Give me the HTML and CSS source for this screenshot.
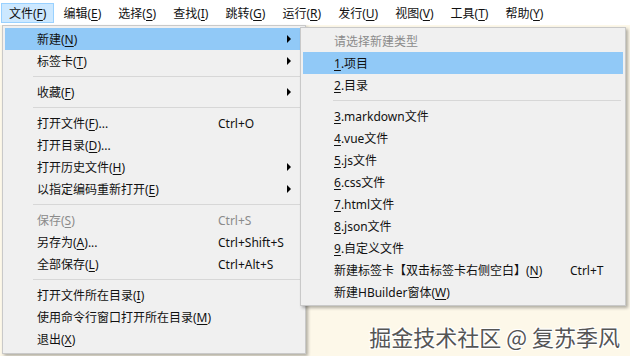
FILE: index.html
```html
<!DOCTYPE html>
<html lang="zh-CN">
<head>
    <meta charset="UTF-8">
    <title>HBuilderX 文件菜单</title>
    <meta name="viewport" content="width=device-width, initial-scale=1.0">
    <link rel="stylesheet" href="styles.css">
</head>
<body>
    <div class="menu-bar">
        <span class="bar-item active">文件(<u>F</u>)</span>
        <span class="bar-item">编辑(<u>E</u>)</span>
        <span class="bar-item">选择(<u>S</u>)</span>
        <span class="bar-item">查找(<u>I</u>)</span>
        <span class="bar-item">跳转(<u>G</u>)</span>
        <span class="bar-item">运行(<u>R</u>)</span>
        <span class="bar-item">发行(<u>U</u>)</span>
        <span class="bar-item">视图(<u>V</u>)</span>
        <span class="bar-item">工具(<u>T</u>)</span>
        <span class="bar-item">帮助(<u>Y</u>)</span>
    </div>

    <div class="workspace">
        <!-- menu principal -->
        <div class="dropdown main-menu">
            <div class="item hover"><span>新建(<u>N</u>)</span><span></span><i class="arrow"></i></div>
            <div class="item"><span>标签卡(<u>T</u>)</span><span></span><i class="arrow"></i></div>
            <div class="sep"></div>
            <div class="item"><span>收藏(<u>F</u>)</span><span></span><i class="arrow"></i></div>
            <div class="sep"></div>
            <div class="item"><span>打开文件(<u>F</u>)...</span><span>Ctrl+O</span><i></i></div>
            <div class="item"><span>打开目录(<u>D</u>)...</span><span></span><i></i></div>
            <div class="item"><span>打开历史文件(<u>H</u>)</span><span></span><i class="arrow"></i></div>
            <div class="item"><span>以指定编码重新打开(<u>E</u>)</span><span></span><i class="arrow"></i></div>
            <div class="sep"></div>
            <div class="item disabled"><span>保存(<u>S</u>)</span><span>Ctrl+S</span><i></i></div>
            <div class="item"><span>另存为(<u>A</u>)...</span><span>Ctrl+Shift+S</span><i></i></div>
            <div class="item"><span>全部保存(<u>L</u>)</span><span>Ctrl+Alt+S</span><i></i></div>
            <div class="sep"></div>
            <div class="item"><span>打开文件所在目录(<u>I</u>)</span><span></span><i></i></div>
            <div class="item"><span>使用命令行窗口打开所在目录(<u>M</u>)</span><span></span><i></i></div>
            <div class="item"><span>退出(<u>X</u>)</span><span></span><i></i></div>
        </div>

        <!-- submenu novo -->
        <div class="dropdown sub-menu">
            <div class="item disabled"><span>请选择新建类型</span><span></span></div>
            <div class="item hover"><span><u>1</u>.项目</span><span></span></div>
            <div class="item"><span><u>2</u>.目录</span><span></span></div>
            <div class="sep"></div>
            <div class="item"><span><u>3</u>.markdown文件</span><span></span></div>
            <div class="item"><span><u>4</u>.vue文件</span><span></span></div>
            <div class="item"><span><u>5</u>.js文件</span><span></span></div>
            <div class="item"><span><u>6</u>.css文件</span><span></span></div>
            <div class="item"><span><u>7</u>.html文件</span><span></span></div>
            <div class="item"><span><u>8</u>.json文件</span><span></span></div>
            <div class="item"><span><u>9</u>.自定义文件</span><span></span></div>
            <div class="item"><span>新建标签卡【双击标签卡右侧空白】(<u>N</u>)</span><span>Ctrl+T</span></div>
            <div class="item"><span>新建HBuilder窗体(<u>W</u>)</span><span></span></div>
        </div>

        <div class="watermark">掘金技术社区 @ 复苏季风</div>
    </div>
</body>
</html>
```

FILE: styles.css
```css
body {
    margin: 0;
    width: 630px;
    height: 356px;
    overflow: hidden;
    font-family: "Noto Sans", "Noto Sans CJK SC", sans-serif;
    font-size: 12px;
    color: #111;
    background-color: #fdf8e9;
}
u {
    text-decoration-thickness: 1px;
    text-underline-offset: 2px;
}
.menu-bar {
    height: 25px;
    background-color: #fff;
    display: flex;
    align-items: center;
    padding-left: 1px;
}
.bar-item {
    height: 20px;
    line-height: 20px;
    padding: 0 7px;
    margin-right: 1px;
    border: 1px solid transparent;
    box-sizing: border-box;
}
.bar-item.active {
    background-color: #cce8ff;
    border-color: #99d1ff;
}
.workspace {
    position: relative;
    height: 331px;
}
/* menus abertos por cima do editor */
.dropdown {
    position: absolute;
    background-color: #f0f0f0;
    border: 1px solid #c9c9c9;
    box-sizing: border-box;
    padding: 2px 2px;
    box-shadow: 2px 2px 3px rgba(0, 0, 0, 0.3);
}
.main-menu {
    left: 2px;
    top: 0;
    width: 304px;
    height: 329px;
}
.sub-menu {
    left: 300px;
    top: 2px;
    width: 326px;
    height: 279px;
    padding: 2px 2px;
}
.item {
    height: 22px;
    display: grid;
    align-items: center;
    white-space: nowrap;
}
.main-menu .item {
    grid-template-columns: 181px 1fr 16px;
    padding-left: 32px;
}
.sub-menu .item {
    grid-template-columns: 236px 1fr;
    padding-left: 31px;
}
.item.hover {
    background-color: #91c9f7;
}
.item.disabled {
    color: #8b8b8b;
}
.arrow {
    width: 0;
    height: 0;
    border-top: 4px solid transparent;
    border-bottom: 4px solid transparent;
    border-left: 4px solid #000;
}
.sep {
    height: 9px;
    display: flex;
    align-items: center;
}
.sep::after {
    content: "";
    flex: 1;
    height: 1px;
    background-color: #d7d7d7;
}
.main-menu .sep {
    margin: 0 0 0 28px;
}
.sub-menu .sep {
    margin: 0 2px 0 30px;
}
.watermark {
    position: absolute;
    right: 10px;
    bottom: 4px;
    font-family: "Noto Sans CJK SC", sans-serif;
    font-size: 22px;
    color: #555;
    text-shadow: 1px 1px 0 #fff, -1px -1px 0 #fff, 1px -1px 0 #fff, -1px 1px 0 #fff;
}
```
